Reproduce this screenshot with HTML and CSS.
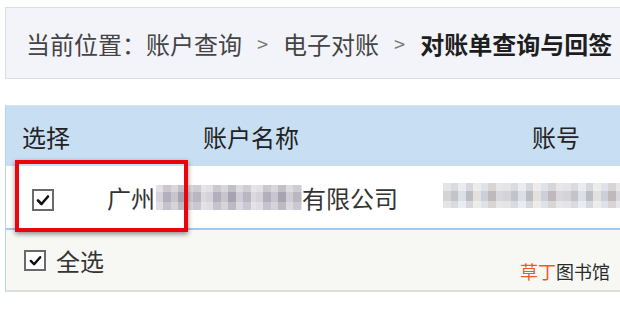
FILE: index.html
```html
<!DOCTYPE html>
<html lang="zh-CN">
<head>
<meta charset="utf-8">
<title>对账单查询与回签</title>
<link rel="stylesheet" href="styles.css">
</head>
<body>
<div class="crumb">
  <span>当前位置：账户查询</span><span class="sep">&gt;</span><span>电子对账</span><span class="sep">&gt;</span><span class="current">对账单查询与回签</span>
</div>

<div class="table">
  <div class="row head">
    <div class="h-sel">选择</div>
    <div class="h-name">账户名称</div>
    <div class="h-acct">账号</div>
  </div>
  <div class="row data">
    <div class="c-sel"><span class="cb"><svg viewBox="0 0 16 16" width="16" height="16"><path d="M3 8.5 L6.5 12 L13 4.5" fill="none" stroke="#111" stroke-width="2.6" stroke-linecap="round" stroke-linejoin="round"/></svg></span></div>
    <div class="c-name">广州<span class="blur blur-name"></span>有限公司</div>
    <div class="c-acct"><span class="blur blur-acct"></span></div>
  </div>
  <div class="row foot">
    <span class="cb cb-small"><svg viewBox="0 0 16 16" width="15" height="15"><path d="M3 8.5 L6.5 12 L13 4.5" fill="none" stroke="#111" stroke-width="2.6" stroke-linecap="round" stroke-linejoin="round"/></svg></span>
    <span class="all">全选</span>
    <span class="mark"><span class="mark-a">草丁</span>图书馆</span>
  </div>
</div>

<div class="highlight"></div>
</body>
</html>
```

FILE: styles.css
```css
html, body {
  margin: 0;
  padding: 0;
  background: #ffffff;
  font-family: "Noto Sans CJK SC", "Noto Sans", sans-serif;
  overflow: hidden;
}
body {
  width: 620px;
  height: 309px;
  position: relative;
}
.crumb {
  box-sizing: border-box;
  margin: 7px 0 0 5px;
  height: 72px;
  width: 615px;
  border: 1px solid #dcdde8;
  border-right: none;
  background: #f3f4fa;
  display: flex;
  align-items: center;
  padding-left: 20px;
  font-size: 24px;
  color: #444;
  white-space: nowrap;
  overflow: hidden;
}
.crumb .sep {
  margin: 0 15px;
  font-size: 20px;
  color: #777;
}
.crumb .current {
  font-weight: bold;
  color: #1e1e1e;
}
.table {
  margin: 26px 0 0 5px;
  width: 615px;
  border-left: 1px solid #b8d2ec;
}
.row {
  display: flex;
  align-items: center;
  white-space: nowrap;
  overflow: hidden;
}
.head {
  height: 60px;
  background: #c8dff3;
  border-top: 1px solid #d6e6f5;
  font-size: 24px;
  color: #222;
}
.h-sel { width: 181px; padding-left: 16px; flex: none; }
.h-name { width: 329px; flex: none; }
.data {
  height: 62px;
  background: #ffffff;
  border-bottom: 2px solid #a3c8ec;
  font-size: 24px;
  color: #333;
}
.c-sel { width: 101px; padding-left: 26px; box-sizing: border-box; flex: none; }
.c-name { width: 330px; display: flex; align-items: center; flex: none; }
.c-acct { flex: 1; }
.cb {
  display: inline-flex;
  align-items: center;
  justify-content: center;
  width: 18px;
  height: 18px;
  border: 2px solid #6a6a6a;
  background: #fff;
}
.blur {
  display: inline-block;
  height: 25px;
}
.blur-name {
  width: 146px;
  margin: 0 0 0 1px;
  background:
    linear-gradient(180deg, rgba(255,255,255,0.3) 0 7px, rgba(255,255,255,0) 7px 17px, rgba(255,255,255,0.25) 17px),
    repeating-linear-gradient(90deg, #d5d2db 0 7px, #b3afbd 7px 15px, #c8c5cf 15px 22px, #a7a3b0 22px 30px, #cfccd6 30px 37px, #bab6c2 37px 45px, #ddd9e0 45px 50px);
}
.blur-acct {
  width: 190px;
  margin-left: 6px;
  background:
    linear-gradient(180deg, rgba(255,255,255,0.4) 0 8px, rgba(255,255,255,0) 8px 18px, rgba(255,255,255,0.4) 18px),
    repeating-linear-gradient(90deg, #d3d3d8 0 8px, #c3c3ca 8px 15px, #dbdfe6 15px 23px, #bcbcc4 23px 30px, #e3e0de 30px 38px, #cad0da 38px 45px, #bfb9b9 45px 53px, #d7d7dc 53px 60px);
}
.foot {
  position: relative;
  height: 60px;
  background: #f7f8f4;
  border-bottom: 2px solid #dedede;
  padding-left: 18px;
  font-size: 24px;
  color: #333;
}
.cb-small { width: 18px; height: 17px; }
.all { margin-left: 10px; }
.mark {
  position: absolute;
  left: 514px;
  bottom: 6px;
  font-size: 18px;
  color: #2a2a2a;
  text-shadow: 0 0 2px #fff, 0 0 2px #fff;
}
.mark-a { color: #f2581c; }
.highlight {
  position: absolute;
  left: 15px;
  top: 160px;
  width: 165px;
  height: 64px;
  border: 4px solid #e8050d;
  box-shadow: 0 2px 5px rgba(0,0,0,0.45);
}
```
